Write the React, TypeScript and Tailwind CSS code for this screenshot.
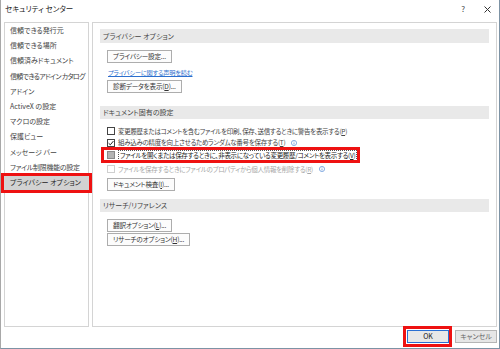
import type { ReactNode } from "react";

const sideItems = [
  { label: "信頼できる発行元", cls: "" },
  { label: "信頼できる場所", cls: "" },
  { label: "信頼済みドキュメント", cls: "" },
  { label: "信頼できるアドイン カタログ", cls: "tracking-[-0.7px]" },
  { label: "アドイン", cls: "" },
  { label: "ActiveX の設定", cls: "" },
  { label: "マクロの設定", cls: "" },
  { label: "保護ビュー", cls: "" },
  { label: "メッセージ バー", cls: "" },
  { label: "ファイル制限機能の設定", cls: "tracking-[-0.3px]" },
];

function RedBox({ className }: { className: string }) {
  return (
    <div
      className={`pointer-events-none absolute border-[3px] border-[#ee1111] ${className}`}
    />
  );
}

function Btn({ children, className = "" }: { children: ReactNode; className?: string }) {
  return (
    <div
      className={`flex h-[13px] w-fit items-center justify-center whitespace-nowrap border border-[#adadad] bg-[#fcfcfc] px-[5px] text-[6.6px] tracking-[-0.2px] text-[#333] ${className}`}
    >
      {children}
    </div>
  );
}

function SectionBar({ children, className = "" }: { children: ReactNode; className?: string }) {
  return (
    <div className={`flex h-[13px] items-center bg-[#e9e9e9] pl-[3px] text-[#444] ${className}`}>
      {children}
    </div>
  );
}

function Box({ state }: { state: "off" | "on" | "fill" | "disabled" }) {
  if (state === "fill") {
    return <div className="h-[8px] w-[8px] shrink-0 border border-[#8a8a8a] bg-[#b4b4b4]" />;
  }
  if (state === "disabled") {
    return <div className="h-[8px] w-[8px] shrink-0 border border-[#cfcfcf] bg-white" />;
  }
  return (
    <div className="flex h-[8px] w-[8px] shrink-0 items-center justify-center border border-[#444] bg-white">
      {state === "on" && (
        <svg width="6" height="6" viewBox="0 0 6 6" fill="none" stroke="#222" strokeWidth="1">
          <path d="M0.6 3.2L2.3 4.8L5.4 1.1" />
        </svg>
      )}
    </div>
  );
}

function Info() {
  return (
    <svg width="6" height="6" viewBox="0 0 12 12" fill="none" className="ml-[3px] shrink-0">
      <circle cx="6" cy="6" r="5.2" stroke="#4f86d4" strokeWidth="1.3" />
      <path d="M6 5v4" stroke="#4f86d4" strokeWidth="1.4" />
      <circle cx="6" cy="3.3" r="0.8" fill="#4f86d4" />
    </svg>
  );
}

export default function App() {
  return (
    <div className="relative flex h-[349px] w-[500px] flex-col overflow-hidden border-b border-l border-r border-b-[#7d93a5] border-l-[#a8a8a8] border-r-[#7d93a5] bg-white font-['Noto_Sans_CJK_JP','Noto_Sans',sans-serif] text-[7px] leading-none text-[#444] [font-feature-settings:'palt']">
      {/* Title bar */}
      <div className="mb-[4px] flex h-[18px] items-center justify-between pl-[4px] pr-[8px]">
        <span className="text-[7.5px] text-[#222]">セキュリティ センター</span>
        <div className="flex items-center gap-[19px] text-[#444]">
          <span className="text-[8px]">?</span>
          <svg width="7" height="7" viewBox="0 0 7 7" stroke="#333" strokeWidth="1">
            <path d="M0.5 0.5L6.5 6.5M6.5 0.5L0.5 6.5" />
          </svg>
        </div>
      </div>

      {/* Body */}
      <div className="flex h-[305px] gap-[3px] pl-[3px]">
        {/* Sidebar */}
        <div className="w-[85px] shrink-0 border border-[#d4d4d4]">
          {sideItems.map((item) => (
            <div
              key={item.label}
              className={`flex h-[15.2px] items-center whitespace-nowrap pl-[5px] ${item.cls}`}
            >
              {item.label}
            </div>
          ))}
          <div className="relative flex h-[15.2px] items-center whitespace-nowrap bg-[#d2d2d2] pl-[5px] text-[#222]">
            プライバシー オプション
            <RedBox className="-bottom-[3px] -left-[4px] -right-[4px] -top-[2px]" />
          </div>
        </div>

        {/* Content */}
        <div className="w-[405px] shrink-0 border border-[#d4d4d4] px-[7px] pt-[6px]">
          <SectionBar className="h-[14px]">プライバシー オプション</SectionBar>
          <Btn className="ml-[7px] mt-[7px]">プライバシー設定...</Btn>
          <div className="ml-[8px] mt-[6px] flex h-[9px] items-center">
            <span className="text-[6.2px] tracking-[-0.2px] text-[#2b6fce] underline underline-offset-1">
              プライバシーに関する声明を読む
            </span>
          </div>
          <Btn className="ml-[7px] mt-[2px]">
            診断データを表示(<u>D</u>)...
          </Btn>

          <SectionBar className="mt-[13px]">ドキュメント固有の設定</SectionBar>
          <div className="ml-[7px] mt-[6px] flex h-[12px] items-center gap-[3px] whitespace-nowrap text-[6.5px] tracking-[-0.3px]">
            <Box state="off" />
            <span>
              変更履歴またはコメントを含むファイルを印刷、保存、送信するときに警告を表示する(<u>P</u>)
            </span>
          </div>
          <div className="ml-[7px] flex h-[11px] items-center gap-[3px] whitespace-nowrap text-[6.5px] tracking-[-0.3px]">
            <Box state="on" />
            <span>
              組み込みの精度を向上させるためランダムな番号を保存する(<u>T</u>)
            </span>
            <Info />
          </div>
          <div className="relative ml-[7px] mt-[1px] flex h-[12px] w-fit items-center gap-[3px] whitespace-nowrap text-[6.5px] tracking-[-0.3px]">
            <Box state="fill" />
            <span className="flex h-[11px] items-center border border-dotted border-[#555] px-[1px] text-[#222]">
              ファイルを開くまたは保存するときに、非表示になっている変更履歴/コメントを表示する(<u>V</u>)
            </span>
            <RedBox className="-bottom-[2px] -left-[6px] -right-[3px] -top-[2px]" />
          </div>
          <div className="ml-[7px] mt-[2px] flex h-[12px] items-center gap-[3px] whitespace-nowrap text-[6.5px] tracking-[-0.3px] text-[#a6a6a6]">
            <Box state="disabled" />
            <span>
              ファイルを保存するときにファイルのプロパティから個人情報を削除する(<u>R</u>)
            </span>
            <Info />
          </div>
          <Btn className="ml-[7px] mt-[3px]">
            ドキュメント検査(<u>I</u>)...
          </Btn>

          <SectionBar className="mt-[8px]">リサーチ/リファレンス</SectionBar>
          <Btn className="ml-[7px] mt-[7px] w-[79px]">
            翻訳オプション(<u>L</u>)...
          </Btn>
          <Btn className="ml-[7px] mt-[1px] w-[79px]">
            リサーチのオプション(<u>H</u>)...
          </Btn>
        </div>
      </div>

      {/* Footer */}
      <div className="flex justify-end gap-[6px] pr-[2px] pt-[3px]">
        <div className="relative">
          <div className="flex h-[13px] w-[42px] items-center justify-center border border-[#2b70d2] bg-[#e8e8e8] text-[#222]">
            OK
          </div>
          <RedBox className="-bottom-[4px] -left-[4px] -right-[3px] -top-[4px]" />
        </div>
        <div className="flex h-[13px] w-[42px] items-center justify-center border border-[#b5b5b5] bg-[#e6e6e6] text-[#666]">
          キャンセル
        </div>
      </div>
    </div>
  );
}
